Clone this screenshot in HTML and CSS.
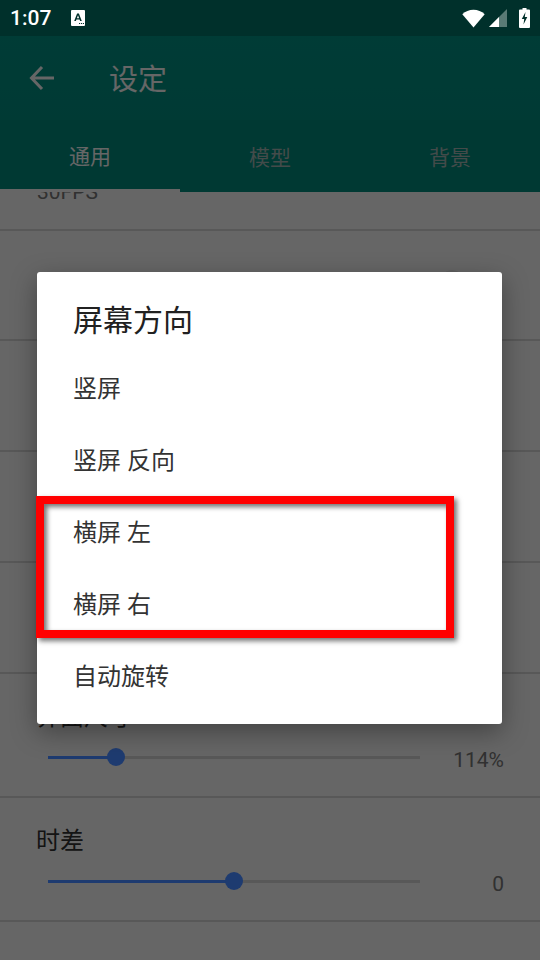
FILE: index.html
```html
<!DOCTYPE html>
<html lang="zh-CN">
<head>
    <meta charset="UTF-8">
    <meta name="viewport" content="width=device-width, initial-scale=1.0">
    <title>设定</title>
    <link rel="stylesheet" href="styles.css">
</head>
<body>
    <div class="screen">
        <div class="status-bar">
            <span class="clock">1:07</span>
            <svg class="notify-icon" width="14" height="16" viewBox="0 0 14 16">
                <path d="M1 0h12a1 1 0 0 1 1 1v14a1 1 0 0 1-1 1H1a1 1 0 0 1-1-1V1a1 1 0 0 1 1-1z" fill="#fff"/>
                <path d="M3.2 11 6.1 3.5h1.8L10.800 11H9.100l-.5-1.500H5.400L4.900 11zM5.900 8.200h2.200L7 5.200z" fill="#00302b"/>
                <path d="M8 13h1.200v1H8zM10 13h1.200v1H10zM12 13h1v1h-1z" fill="#00302b"/>
            </svg>
            <span class="status-spacer"></span>
            <svg class="wifi-icon" width="23" height="19" viewBox="0 0 23 19">
                <path d="M11.500 18.500 0.300 5.200C3.300 2.400 7.200 0.800 11.500 0.800s8.200 1.600 11.200 4.400z" fill="#fff"/>
            </svg>
            <svg class="signal-icon" width="18" height="18" viewBox="0 0 18 18">
                <path d="M18 0v18H0z" fill="#5a7a75"/>
                <path d="M10 8v10H0z" fill="#fff"/>
            </svg>
            <svg class="battery-icon" width="11" height="20" viewBox="0 0 11 20">
                <path d="M3.500 0h4v1.500H10a1 1 0 0 1 1 1V19a1 1 0 0 1-1 1H1a1 1 0 0 1-1-1V2.500a1 1 0 0 1 1-1h2.500z" fill="#fff"/>
                <path d="M6.500 4 2.800 11h2.400l-.7 5.500L8.300 9H5.800z" fill="#00302b"/>
            </svg>
        </div>

        <div class="toolbar">
            <svg class="back-icon" width="26" height="26" viewBox="0 0 26 26">
                <path d="M25 13H3M13 2 2.500 13 13 24" fill="none" stroke="#fff" stroke-width="3"/>
            </svg>
            <span class="toolbar-title">设定</span>
        </div>

        <div class="tabs">
            <div class="tab active">通用</div>
            <div class="tab">模型</div>
            <div class="tab">背景</div>
        </div>

        <div class="settings">
            <div class="row row-first"><span class="row-value">30FPS</span></div>
            <div class="row row-switch"><span class="switch-thumb"></span></div>
            <div class="row"></div>
            <div class="row"></div>
            <div class="row"></div>
            <div class="row row-slider">
                <div class="row-title">界面尺寸</div>
                <div class="slider-line">
                    <div class="slider">
                        <div class="slider-fill" style="width: 18.3%"></div>
                        <div class="slider-thumb" style="left: 18.3%"></div>
                    </div>
                    <span class="slider-value">114%</span>
                </div>
            </div>
            <div class="row row-slider">
                <div class="row-title">时差</div>
                <div class="slider-line">
                    <div class="slider">
                        <div class="slider-fill" style="width: 50%"></div>
                        <div class="slider-thumb" style="left: 50%"></div>
                    </div>
                    <span class="slider-value">0</span>
                </div>
            </div>
        </div>

        <div class="scrim"></div>

        <div class="dialog">
            <div class="dialog-title">屏幕方向</div>
            <div class="dialog-item">竖屏</div>
            <div class="dialog-item">竖屏 反向</div>
            <div class="dialog-item">横屏 左</div>
            <div class="dialog-item">横屏 右</div>
            <div class="dialog-item">自动旋转</div>
        </div>

        <div class="highlight"></div>
    </div>
</body>
</html>
```

FILE: styles.css
```css
* {
    box-sizing: border-box;
}

body {
    margin: 0;
    font-family: Roboto, "Noto Sans CJK SC", sans-serif;
    background-color: #fff;
}

.screen {
    position: relative;
    display: flex;
    flex-direction: column;
    width: 540px;
    height: 960px;
    overflow: hidden;
    background-color: #ffffff;
}

.status-bar {
    position: relative;
    z-index: 3;
    display: flex;
    align-items: center;
    flex: 0 0 36px;
    padding: 0 10px;
    background-color: #00302b;
}

.clock {
    color: #fff;
    font-size: 21px;
    font-weight: 500;
    line-height: 36px;
}

.notify-icon {
    margin-left: 20px;
}

.status-spacer {
    flex: 1;
}

.signal-icon {
    margin-left: 4px;
}

.battery-icon {
    margin-left: 12px;
}

.toolbar {
    display: flex;
    align-items: center;
    flex: 0 0 84px;
    padding-left: 29px;
    background: linear-gradient(#009688, #009183);
}

.toolbar-title {
    margin-left: 54px;
    padding-bottom: 2px;
    color: #ffffff;
    font-size: 29px;
}

.tabs {
    display: flex;
    flex: 0 0 72px;
    background-color: #008e80;
}

.tab {
    flex: 1;
    height: 72px;
    padding-top: 2px;
    color: #a8bcb9;
    font-size: 21px;
    line-height: 72px;
    text-align: center;
}

.tab.active {
    color: #ffffff;
    border-bottom: 3px solid #fff;
    line-height: 71px;
}

.settings {
    flex: 1;
    min-height: 0;
    overflow: hidden;
}

.row {
    height: 111px;
    padding: 0 37px;
    border-bottom: 2px solid #ddd;
}

.row-first {
    display: flow-root;
    height: 39px;
}

.row-switch {
    position: relative;
    height: 110px;
}

.row-value {
    display: block;
    margin-top: -10px;
    color: #7a7a7a;
    font-size: 21px;
    line-height: 20px;
}

.switch-thumb {
    position: absolute;
    top: 39px;
    left: 440px;
    width: 24px;
    height: 24px;
    border-radius: 50%;
    background-color: #f0f0f0;
}

.row-slider {
    height: 124px;
    padding-top: 28px;
}

.row-title {
    margin-left: -1px;
    color: #333;
    font-size: 24px;
    line-height: 30px;
}

.slider-line {
    display: flex;
    align-items: center;
    margin-top: 10px;
    margin-right: -1px;
    padding-left: 11px;
}

.slider {
    position: relative;
    width: 372px;
    height: 3px;
    background-color: #ddd;
}

/* the accent is darker than the scrim would leave it, so it sits on top */
.slider-fill {
    position: relative;
    z-index: 2;
    height: 3px;
    background-color: #1e3b70;
}

.slider-thumb {
    position: absolute;
    top: -8px;
    z-index: 2;
    width: 18px;
    height: 18px;
    margin-left: -9px;
    border-radius: 50%;
    background-color: #1e3b70;
}

.slider-value {
    flex: 1;
    padding-top: 6px;
    color: #7a7a7a;
    font-size: 21px;
    line-height: 24px;
    text-align: right;
}

.scrim {
    position: absolute;
    top: 0;
    left: 0;
    right: 0;
    bottom: 0;
    z-index: 1;
    background-color: rgba(0, 0, 0, 0.6);
}

.dialog {
    position: absolute;
    top: 272px;
    left: 37px;
    z-index: 2;
    width: 465px;
    height: 452px;
    padding: 27px 36px 0;
    border-radius: 3px;
    background-color: #fff;
    box-shadow: 0 8px 26px rgba(0, 0, 0, 0.35);
}

.dialog-title {
    margin-bottom: 10px;
    color: #212121;
    font-size: 30px;
    line-height: 44px;
}

.dialog-item {
    height: 72px;
    color: #333;
    font-size: 24px;
    line-height: 72px;
    white-space: pre;
}

.highlight {
    position: absolute;
    top: 496px;
    left: 36px;
    z-index: 2;
    width: 418px;
    height: 142px;
    border: 8px solid #f00;
    box-shadow: 3px 3px 5px rgba(0, 0, 0, 0.55), inset 3px 3px 5px rgba(0, 0, 0, 0.55);
}
```
